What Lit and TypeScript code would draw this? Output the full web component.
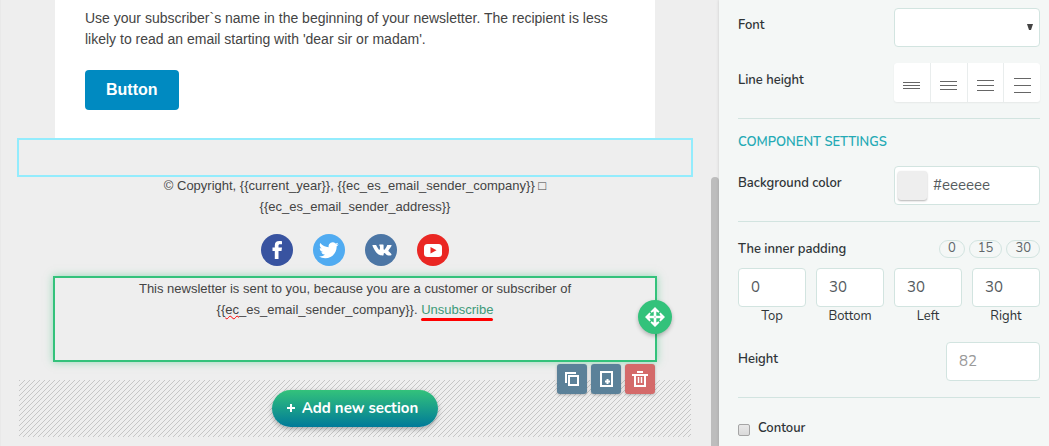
import { LitElement, html, css, svg } from "lit";
import { customElement, state } from "lit/decorators.js";

const social = [
  {
    name: "Facebook",
    color: "#3853a0",
    art: svg`<path fill="#fff" d="M17.500 25v-8h3l.5-3.500h-3.500v-1.700c0-1 .4-1.500 1.500-1.500h2V7.200c-.5-.1-1.400-.2-2.600-.2-3 0-4.600 1.500-4.600 4.400v2.100H11.500V17h2.300v8z"/>`,
  },
  {
    name: "Twitter",
    color: "#50abf1",
    art: svg`<path fill="#fff" transform="translate(6 6.500) scale(.82)" d="M23.950 4.570a10 10 0 0 1-2.820.77 4.960 4.960 0 0 0 2.160-2.720c-.95.550-2 .950-3.130 1.180a4.920 4.920 0 0 0-8.380 4.480C7.690 8.090 4.070 6.130 1.640 3.160a4.820 4.820 0 0 0-.67 2.480c0 1.710.87 3.210 2.190 4.100a4.900 4.900 0 0 1-2.230-.62v.060a4.920 4.920 0 0 0 3.950 4.830 5 5 0 0 1-2.210.080 4.940 4.940 0 0 0 4.600 3.420A9.870 9.870 0 0 1 0 19.540a14 14 0 0 0 7.550 2.210c9.050 0 14-7.500 14-13.990 0-.210 0-.420-.020-.630a9.940 9.940 0 0 0 2.460-2.550z"/>`,
  },
  {
    name: "VK",
    color: "#4c76a5",
    art: svg`<path fill="#fff" transform="translate(5.500 5.500) scale(.86)" d="M13.160 18.470h1.300s.400-.040.600-.260c.180-.200.180-.580.180-.580s-.030-1.780.800-2.040c.820-.260 1.870 1.720 2.980 2.480.840.580 1.480.450 1.480.450l2.980-.040s1.560-.100.820-1.330c-.060-.100-.430-.910-2.210-2.560-1.870-1.730-1.620-1.450.630-4.450 1.370-1.820 1.920-2.940 1.750-3.410-.160-.460-1.170-.340-1.170-.340l-3.350.020s-.250-.030-.430.080c-.180.110-.300.350-.300.350s-.530 1.410-1.240 2.610c-1.490 2.530-2.090 2.670-2.330 2.510-.570-.370-.430-1.480-.430-2.270 0-2.470.370-3.500-.730-3.760-.360-.090-.630-.150-1.560-.160-1.200-.010-2.210 0-2.780.280-.380.190-.680.610-.500.630.220.030.730.140.990.500.340.470.330 1.520.330 1.520s.200 2.910-.460 3.270c-.450.250-1.070-.260-2.400-2.560-.680-1.180-1.200-2.480-1.200-2.480s-.100-.250-.280-.380c-.210-.160-.510-.210-.510-.210l-3.180.020s-.480.010-.650.220c-.160.190-.010.570-.010.570s2.490 5.830 5.320 8.770c2.590 2.700 5.530 2.520 5.530 2.520z"/>`,
  },
  {
    name: "YouTube",
    color: "#ea2723",
    art: svg`<rect x="7" y="10" width="18" height="13" rx="3.500" fill="#fff"/><path fill="#ea2723" d="M13.500 13v6.500l6-3.250z"/>`,
  },
];

@customElement("line-height-picker")
class LineHeightPicker extends LitElement {
  static styles = css`
    :host { display: block; }
    .group {
      display: grid;
      grid-template-columns: repeat(4, 1fr);
      gap: 1px;
      background: #e9eded;
      border-radius: 3px;
      overflow: hidden;
      box-shadow: 0 1px 2px rgba(0, 0, 0, 0.06);
    }
    .option {
      display: grid;
      place-items: center;
      height: 39px;
      padding: 6px 0 0;
      border: 0;
      background: #fff;
      cursor: pointer;
    }
  `;

  render() {
    return html`<div class="group" role="group" aria-label="Line height">
      ${[3, 4, 5, 7].map(
        (gap) => html`<button class="option" aria-label="Spacing ${gap}">
          <svg width="17" height="17" shape-rendering="crispEdges" fill="#666">
            ${[8 - gap, 8, 8 + gap].map((y) => svg`<rect y=${y} width="17" height="1" />`)}
          </svg>
        </button>`
      )}
    </div>`;
  }
}

@customElement("settings-panel")
class SettingsPanel extends LitElement {
  @state() private padding = [
    { side: "Top", value: 0 },
    { side: "Bottom", value: 30 },
    { side: "Left", value: 30 },
    { side: "Right", value: 30 },
  ];

  static styles = css`
    :host {
      display: block;
      box-sizing: border-box;
      padding: 8px 9px 8px 19px;
      background: #f4f7f6;
      color: #2f3437;
      font: 600 13px/18px Nunito, "Noto Sans", sans-serif;
    }
    * { box-sizing: border-box; }
    .row {
      display: flex;
      justify-content: space-between;
      align-items: flex-start;
      margin-bottom: 16px;
    }
    .row > label, .name { padding-top: 8px; }
    .wide { width: 146px; }
    .field {
      height: 39px;
      border: 1px solid #d2e4e0;
      border-radius: 4px;
      background: #fff;
      color: #555b5e;
      font: 400 15px/20px Nunito, "Noto Sans", sans-serif;
    }
    .select {
      appearance: none;
      padding: 0 12px;
    }
    .selectbox { position: relative; display: flex; }
    .selectbox svg {
      position: absolute;
      right: 7px;
      top: 16px;
      pointer-events: none;
    }
    .rule {
      margin: 0 0 14px;
      border: 0;
      border-top: 1px solid #d2e4e0;
    }
    .title {
      margin: 0 0 15px;
      color: #24aab5;
      font: 600 13px/18px Nunito, "Noto Sans", sans-serif;
    }
    .color {
      display: flex;
      align-items: center;
      gap: 6px;
      padding: 0 3px;
    }
    .swatch {
      width: 29px;
      height: 29px;
      padding: 0;
      border: 0;
      border-radius: 3px;
      background: #eee;
      box-shadow: 0 1px 2px rgba(0, 0, 0, 0.3);
    }
    .hex {
      flex: 1;
      min-width: 0;
      padding: 0 0 2px;
      border: 0;
      background: none;
      color: inherit;
      font: inherit;
    }
    .presets { display: flex; gap: 4px; padding-top: 4px; }
    .heading { display: flex; justify-content: space-between; margin-bottom: 10px; }
    .heading .name { padding-top: 4px; }
    .pill {
      height: 18px;
      padding: 0 8px 2px;
      border: 1px solid #d2e4e0;
      border-radius: 9px;
      background: none;
      color: #60666a;
      font: 400 13px/14px Nunito, "Noto Sans", sans-serif;
    }
    .sides {
      display: grid;
      grid-template-columns: repeat(4, 1fr);
      gap: 10px;
      margin-bottom: 16px;
    }
    .side {
      display: flex;
      flex-direction: column;
      font-weight: 400;
      line-height: 19px;
      text-align: center;
    }
    .number { width: 100%; padding: 0 12px 2px; }
    .height { width: 94px; }
    .height::placeholder { color: #999; opacity: 1; }
    .check { display: flex; gap: 8px; align-items: center; padding-top: 7px; }
    .box {
      appearance: none;
      width: 12px;
      height: 12px;
      margin: 4px 0 0;
      border: 1px solid #a5a5a5;
      border-radius: 2px;
      background: linear-gradient(#e9e9e9, #dadada);
    }
  `;

  render() {
    return html`
      <div class="row">
        <label for="font">Font</label>
        <div class="selectbox wide">
          <select id="font" class="field select wide"><option></option></select>
          <svg width="6" height="6"><path fill="#444" d="M0 0h6l-2 6h-2z" /></svg>
        </div>
      </div>
      <div class="row">
        <span class="name">Line height</span>
        <line-height-picker class="wide"></line-height-picker>
      </div>
      <hr class="rule" />
      <h2 class="title">COMPONENT SETTINGS</h2>
      <div class="row">
        <label for="hex">Background color</label>
        <div class="field color wide">
          <button class="swatch" aria-label="Pick a color"></button>
          <input id="hex" class="hex" value="#eeeeee" />
        </div>
      </div>
      <hr class="rule" />
      <div class="heading">
        <span class="name">The inner padding</span>
        <div class="presets">
          ${[0, 15, 30].map(
            (n) => html`<button class="pill"
              @click=${() => (this.padding = this.padding.map((p) => ({ ...p, value: n })))}>${n}</button>`
          )}
        </div>
      </div>
      <div class="sides">
        ${this.padding.map(
          (p) => html`<label class="side">
            <input class="field number" .value=${String(p.value)} />${p.side}
          </label>`
        )}
      </div>
      <div class="row">
        <label for="height">Height</label>
        <input id="height" class="field number height" placeholder="82" />
      </div>
      <hr class="rule" />
      <div class="check">
        <input id="contour" class="box" type="checkbox" />
        <label for="contour">Contour</label>
      </div>
    `;
  }
}

@customElement("email-canvas")
class EmailCanvas extends LitElement {
  static styles = css`
    :host {
      display: block;
      color: #444;
      font: 13px/21px Arial, "Liberation Sans", sans-serif;
    }
    * { box-sizing: border-box; }
    p { margin: 0; }
    .mail { max-width: 600px; margin: 0 auto; }
    .body {
      padding: 8px 30px 28px;
      background: #fff;
      font-size: 14px;
    }
    .cta {
      display: block;
      height: 40px;
      margin-top: 20px;
      padding: 0 21px;
      border: 0;
      border-radius: 4px;
      background: #008ac1;
      color: #fff;
      font: bold 16px/20px Arial, "Liberation Sans", sans-serif;
    }
    .drop {
      max-width: 676px;
      height: 39px;
      margin: 0 auto;
      border: 2px solid #93ecfd;
    }
    .copy { margin-top: -2px; text-align: center; }
    .social {
      display: flex;
      justify-content: center;
      gap: 20px;
      padding: 17px 0 10px;
    }
    .social a, .social svg { display: block; }
    .selected {
      position: relative;
      max-width: 604px;
      height: 86px;
      margin: 0 auto 18px;
      border: 2px solid #33c27b;
      box-shadow: 0 0 8px rgba(51, 194, 123, 0.5);
      text-align: center;
    }
    .typo { text-decoration: underline wavy #f00 1px; text-underline-offset: 1px; }
    .unsubscribe {
      position: relative;
      color: #3c9a78;
      text-decoration: none;
    }
    .unsubscribe::after {
      content: "";
      position: absolute;
      left: 0;
      right: 0;
      bottom: -4px;
      height: 3px;
      border-radius: 2px;
      background: #f00;
    }
    .move {
      position: absolute;
      top: 22px;
      right: -17px;
      width: 34px;
      height: 34px;
      padding: 0;
      border: 0;
      border-radius: 50%;
      background: #33c27b;
      box-shadow: 0 2px 4px rgba(0, 0, 0, 0.25);
    }
    .move svg, .tool svg { display: block; margin: auto; }
    .tools {
      position: absolute;
      top: 86px;
      right: 0;
      display: flex;
      gap: 4px;
    }
    .tool {
      width: 30px;
      height: 30px;
      padding: 0;
      border: 0;
      border-radius: 3px;
      background: #5b8199;
      box-shadow: 0 1px 3px rgba(0, 0, 0, 0.25);
    }
    .danger { background: #d46a6a; }
    .hatch {
      display: grid;
      grid-template: 57px / 1fr;
      place-items: center;
      max-width: 672px;
      margin: 0 auto;
    }
    .hatch > * { grid-area: 1 / 1; }
    .add {
      display: flex;
      align-items: center;
      gap: 7px;
      height: 37px;
      padding: 0 20px 2px 15px;
      border: 0;
      border-radius: 19px;
      background: linear-gradient(#33c27b, #007a99);
      box-shadow: 0 2px 5px rgba(0, 0, 0, 0.3);
      color: #fff;
      font: 700 15px/20px Nunito, "Noto Sans", sans-serif;
      z-index: 0;
    }
  `;

  render() {
    return html`
      <div class="mail body">
        <p>Use your subscriber\`s name in the beginning of your newsletter. The recipient is less
          likely to read an email starting with 'dear sir or madam'.</p>
        <button class="cta">Button</button>
      </div>
      <div class="drop"></div>
      <div class="mail">
        <p class="copy">© Copyright, {{current_year}}, {{ec_es_email_sender_company}} □<br />
          {{ec_es_email_sender_address}}</p>
        <div class="social">
          ${social.map(
            (s) => html`<a href="#" aria-label=${s.name}>
              <svg width="32" height="32"><circle cx="16" cy="16" r="16" fill=${s.color} />${s.art}</svg>
            </a>`
          )}
        </div>
      </div>
      <div class="selected">
        <p>This newsletter is sent to you, because you are a customer or subscriber of<br />
          {{<span class="typo">ec</span>_es_email_sender_company}}.
          <a class="unsubscribe" href="#">Unsubscribe</a></p>
        <button class="move" aria-label="Move">
          <svg width="20" height="20" fill="#fff">
            <path d="M10 0l4.500 4.500-1 1.200-2.200-1.200v4.200h4.200l-1.200-2.200 1.200-1L20 10l-4.500 4.500-1.200-1 1.200-2.200h-4.200v4.200l2.200-1.200 1 1.200L10 20l-4.500-4.500 1-1.200 2.200 1.200v-4.200H4.500l1.200 2.200-1.200 1L0 10l4.500-4.500 1.200 1-1.200 2.200h4.200V4.500L6.500 5.700l-1-1.200z" />
            <path fill="#33c27b" d="M9.500 9.500h1v1h-1z" />
          </svg>
        </button>
        <div class="tools">
          <button class="tool" aria-label="Duplicate">
            <svg width="16" height="16" fill="none" stroke="#fff" stroke-width="2">
              <path d="M2 12V2h10" /><path d="M5 5h9v9H5z" />
            </svg>
          </button>
          <button class="tool" aria-label="Save block">
            <svg width="16" height="16" fill="none" stroke="#fff" stroke-width="2">
              <path d="M3 1h11v14H3z" /><path d="M9.500 8v5M7 10.500h5" />
            </svg>
          </button>
          <button class="tool danger" aria-label="Delete">
            <svg width="16" height="16" fill="none" stroke="#fff" stroke-width="2">
              <path d="M0 4h16M5 1h6" /><path d="M3 4v11h10V4" /><path stroke-width="1.500" d="M6.500 6v6M9.500 6v6" />
            </svg>
          </button>
        </div>
      </div>
      <div class="hatch">
        <svg width="100%" height="57">
          <defs>
            <pattern id="stripes" width="5" height="5" patternUnits="userSpaceOnUse">
              <path shape-rendering="crispEdges" fill="#c6c6c6"
                d="M0 0h1v1H0zM4 1h1v1H4zM3 2h1v1H3zM2 3h1v1H2zM1 4h1v1H1z" />
            </pattern>
          </defs>
          <rect width="100%" height="57" fill="url(#stripes)" />
        </svg>
        <button class="add">
          <svg width="8" height="8" stroke="#fff" stroke-width="2"><path d="M0 4h8M4 0v8" /></svg>
          Add new section
        </button>
      </div>
    `;
  }
}

@customElement("app-root")
class AppRoot extends LitElement {
  static styles = css`
    :host {
      display: grid;
      grid-template-columns: minmax(0, 1fr) 330px;
      height: 100vh;
      overflow: hidden;
      background: #eee;
    }
    .editor {
      display: grid;
      grid-template-columns: minmax(0, 1fr) 8px;
      gap: 1px;
      min-height: 0;
      box-shadow: inset 1px 0 #e9e9e9;
    }
    .thumb {
      margin-top: 177px;
      border-radius: 4px 4px 0 0;
      background: #bdbdbd;
    }
    .panel { box-shadow: 0 0 3px rgba(0, 0, 0, 0.15); }
  `;

  render() {
    return html`
      <main class="editor">
        <email-canvas></email-canvas>
        <div class="thumb"></div>
      </main>
      <settings-panel class="panel"></settings-panel>
    `;
  }
}
